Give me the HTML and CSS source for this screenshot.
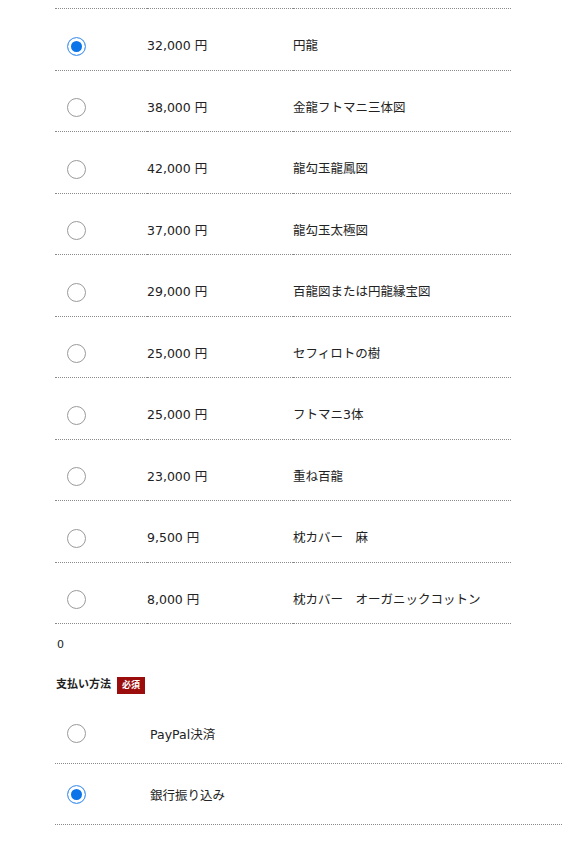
FILE: index.html
```html
<!DOCTYPE html>
<html lang="ja">
<head>
<meta charset="utf-8">
<link rel="stylesheet" href="styles.css">
</head>
<body>
<div class="page">
  <table class="items">
    <tbody>
      <tr><td class="c-radio"><input type="radio" name="item" checked></td><td class="c-price">32,000 円</td><td class="c-name">円龍</td></tr>
      <tr><td class="c-radio"><input type="radio" name="item"></td><td class="c-price">38,000 円</td><td class="c-name">金龍フトマニ三体図</td></tr>
      <tr><td class="c-radio"><input type="radio" name="item"></td><td class="c-price">42,000 円</td><td class="c-name">龍勾玉龍鳳図</td></tr>
      <tr><td class="c-radio"><input type="radio" name="item"></td><td class="c-price">37,000 円</td><td class="c-name">龍勾玉太極図</td></tr>
      <tr><td class="c-radio"><input type="radio" name="item"></td><td class="c-price">29,000 円</td><td class="c-name">百龍図または円龍縁宝図</td></tr>
      <tr><td class="c-radio"><input type="radio" name="item"></td><td class="c-price">25,000 円</td><td class="c-name">セフィロトの樹</td></tr>
      <tr><td class="c-radio"><input type="radio" name="item"></td><td class="c-price">25,000 円</td><td class="c-name">フトマニ3体</td></tr>
      <tr><td class="c-radio"><input type="radio" name="item"></td><td class="c-price">23,000 円</td><td class="c-name">重ね百龍</td></tr>
      <tr><td class="c-radio"><input type="radio" name="item"></td><td class="c-price">9,500 円</td><td class="c-name">枕カバー　麻</td></tr>
      <tr><td class="c-radio"><input type="radio" name="item"></td><td class="c-price">8,000 円</td><td class="c-name">枕カバー　オーガニックコットン</td></tr>
    </tbody>
  </table>
  <p class="total">0</p>
  <div class="field-label">支払い方法<span class="badge">必須</span></div>
  <ul class="pay">
    <li class="pay-row"><span class="pay-radio"><input type="radio" name="pay"></span><span class="pay-text">PayPal決済</span></li>
    <li class="pay-row bordered"><span class="pay-radio"><input type="radio" name="pay" checked></span><span class="pay-text">銀行振り込み</span></li>
  </ul>
</div>
</body>
</html>
```

FILE: styles.css
```css
html, body {
  margin: 0;
  padding: 0;
  background: #fff;
}
body {
  font-family: "DejaVu Sans", "Noto Sans CJK JP", sans-serif;
  color: #222;
  font-size: 12.5px;
}
.page {
  padding: 8px 0 0 55px;
}
.items {
  border-collapse: collapse;
  width: 456px;
  border-top: 1px dotted #8a8a8a;
}
.items tr {
  border-bottom: 1px dotted #8a8a8a;
}
.items td {
  height: 61.5px;
  padding: 14px 0 0 0;
  box-sizing: border-box;
  vertical-align: middle;
  line-height: 18px;
}
.c-radio {
  width: 92px;
  padding-left: 12px !important;
}
.c-price {
  width: 146px;
}
input[type="radio"] {
  -webkit-appearance: none;
  appearance: none;
  width: 19px;
  height: 19px;
  margin: 0;
  display: block;
  box-sizing: border-box;
  border: 1px solid #9a9a9a;
  border-radius: 50%;
  background: #fff;
}
input[type="radio"]:checked {
  border-color: #5a9ff0;
  background: #0a74e8;
  box-shadow: inset 0 0 0 3px #fff;
}
.total {
  margin: 0;
  padding: 14px 0 0 2px;
  font-size: 11px;
  line-height: 14px;
  height: 26px;
}
.field-label {
  display: flex;
  align-items: center;
  gap: 6px;
  font-weight: bold;
  font-size: 11px;
  line-height: 18px;
  padding-left: 1px;
  height: 18px;
  margin-top: 12px;
}
.badge {
  display: inline-block;
  background: #9b0c0c;
  color: #fff;
  font-size: 9px;
  font-weight: bold;
  line-height: 17px;
  height: 17px;
  padding: 0 5px;
}
.pay {
  list-style: none;
  margin: 9px 0 0 0;
  padding: 0;
  width: 507px;
}
.pay-row {
  display: flex;
  align-items: center;
  height: 60px;
  border-bottom: 1px dotted #8a8a8a;
}
.pay-radio {
  width: 95px;
  padding-left: 12px;
  box-sizing: border-box;
}
.pay-text {
  font-size: 12.5px;
}
```
